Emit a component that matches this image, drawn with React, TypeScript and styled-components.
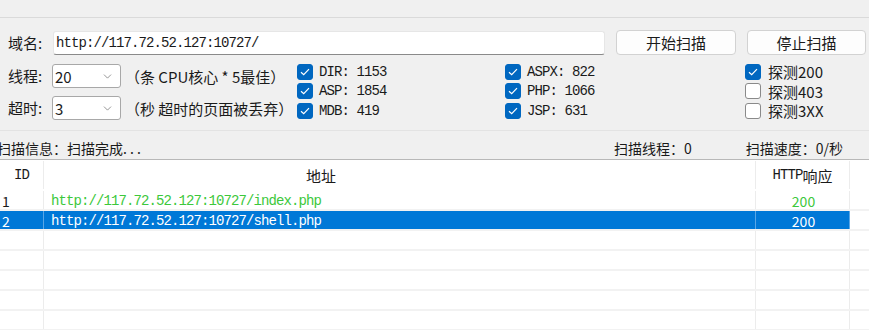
import React from 'react';
import styled, {createGlobalStyle} from 'styled-components';
import {ChevronDown} from 'lucide-react';

const GlobalStyle = createGlobalStyle`
    body {
        margin: 0;
        background: #f0f0f0;
        font-family: "Noto Sans CJK SC", "Noto Sans", sans-serif;
        color: #1a1a1a;
        overflow: hidden;
    }
`

const colors = {
    blue: '#0067c0',
    select: '#0078d7',
    green: '#3cc83c',
    rowLine: '#f2f2f2',
}

const Window = styled.div`
    width: 869px;
    height: 330px;
    overflow: hidden;
    display: flex;
    flex-direction: column;
`

const TopStrip = styled.div`
    height: 17px;
    border-bottom: 1px solid #dadada;
    flex-shrink: 0;
`

const Form = styled.div`
    height: 112px;
    flex-shrink: 0;
    box-sizing: border-box;
    padding: 12px 3px 0 8px;
`

const Row = styled.div`
    display: flex;
    align-items: center;
    height: 25px;
`

const Label = styled.span<{ $w: number }>`
    width: ${p => p.$w}px;
    flex-shrink: 0;
    font-size: 15px;
    line-height: 20px;
`

const Mono = styled.span<{ $color?: string }>`
    font-family: "Liberation Mono", "DejaVu Sans Mono", monospace;
    font-size: 14px;
    letter-spacing: -0.9px;
    color: ${p => p.$color || 'inherit'};
    white-space: pre;
`

const UrlInput = styled.div`
    width: 552px;
    height: 24px;
    box-sizing: border-box;
    background: #fff;
    border: 1px solid #e6e6e6;
    border-bottom: 1px solid #8a8a8a;
    border-radius: 3px;
    display: flex;
    align-items: center;
    padding-left: 2px;
`

const Button = styled.button<{ $w: number }>`
    width: ${p => p.$w}px;
    height: 25px;
    margin-left: 11px;
    background: #fdfdfd;
    border: 1px solid #d2d2d2;
    border-radius: 4px;
    font-family: inherit;
    font-size: 15px;
    color: #1a1a1a;
    padding: 0;
    line-height: 22px;
`

const Options = styled.div`
    display: flex;
    margin-top: 9px;
`

const LeftCol = styled.div`
    width: 289px;
    display: flex;
    flex-direction: column;
    gap: 8px;
`

const ComboRow = styled.div`
    display: flex;
    align-items: center;
    height: 24px;
`

const Combo = styled.div`
    width: 69px;
    height: 24px;
    box-sizing: border-box;
    background: #fff;
    border: 1px solid #a8a8a8;
    border-radius: 3px;
    display: flex;
    align-items: center;
    justify-content: space-between;
    padding: 0 6px 0 2px;
    font-size: 15px;
    color: #6b6b6b;
`

const ComboValue = styled.span`
    color: #1a1a1a;
`

const Hint = styled.span`
    margin-left: 4px;
    font-size: 15px;
    white-space: nowrap;
`

const CheckCol = styled.div<{ $w?: number }>`
    width: ${p => p.$w ? `${p.$w}px` : 'auto'};
    display: grid;
    grid-auto-rows: 19.5px;
    margin-top: -2px;
`

const CheckItem = styled.label<{ $gap: number }>`
    display: flex;
    align-items: center;
    gap: ${p => p.$gap}px;
    font-size: 15px;
    white-space: nowrap;
`

const Box = styled.span<{ $on: boolean }>`
    width: 16px;
    height: 16px;
    box-sizing: border-box;
    border-radius: 3px;
    background: ${p => p.$on ? colors.blue : '#fff'};
    border: 1px solid ${p => p.$on ? colors.blue : '#8a8a8a'};
    display: flex;
    align-items: center;
    justify-content: center;
`

const StatusBar = styled.div`
    height: 30px;
    flex-shrink: 0;
    box-sizing: border-box;
    border-top: 1px solid #e3e3e3;
    border-bottom: 1px solid #b8b8b8;
    display: flex;
    align-items: center;
    padding-top: 6px;
    font-size: 14px;
    white-space: nowrap;
`

const StatusItem = styled.span<{ $left: number }>`
    margin-left: ${p => p.$left}px;
`

const Table = styled.div`
    flex: 1;
    background: #fff;
    display: flex;
    flex-direction: column;
`

const cols = '44px 712px 94px 1fr';

const HeadRow = styled.div`
    display: grid;
    grid-template-columns: ${cols};
    height: 31px;
    flex-shrink: 0;
`

const HeadCell = styled.div<{ $pad?: number; $last?: boolean }>`
    display: flex;
    align-items: center;
    justify-content: ${p => p.$pad !== undefined ? 'flex-start' : 'center'};
    padding-left: ${p => p.$pad || 0}px;
    border-right: ${p => p.$last ? 'none' : '1px solid #ececec'};
    margin: 1px 0 2px;
    font-size: 15px;
`

const BodyRow = styled.div<{ $sel?: boolean }>`
    display: grid;
    grid-template-columns: ${cols};
    height: 20px;
    flex-shrink: 0;
    box-sizing: border-box;
    border-bottom: 2px solid ${colors.rowLine};
    color: ${p => p.$sel ? '#fff' : colors.green};
`

const Cell = styled.div<{ $sel?: boolean; $center?: boolean; $last?: boolean; $pad?: number; $dark?: boolean }>`
    display: flex;
    align-items: center;
    justify-content: ${p => p.$center ? 'center' : 'flex-start'};
    padding: 1px 0 0 ${p => p.$pad ?? 2}px;
    background: ${p => p.$sel && !p.$last ? colors.select : 'transparent'};
    border-right: ${p => p.$last ? 'none' : `1px solid ${p.$sel ? '#5aa6e6' : '#ececec'}`};
    color: ${p => p.$dark && !p.$sel ? '#1a1a1a' : 'inherit'};
    font-size: 14px;
    line-height: 16px;
    white-space: nowrap;
`

const checks = [
    {w: 208, items: [['DIR: 1153', true], ['ASP: 1854', true], ['MDB: 419', true]]},
    {w: 240, items: [['ASPX: 822', true], ['PHP: 1066', true], ['JSP: 631', true]]},
]

const codes: [string, boolean][] = [['探测200', true], ['探测403', false], ['探测3XX', false]]

const results = [
    {id: '1', url: 'http://117.72.52.127:10727/index.php', code: '200'},
    {id: '2', url: 'http://117.72.52.127:10727/shell.php', code: '200', sel: true},
]

function Check({on}: { on: boolean }) {
    return (
        <Box $on={on}>
            {on && (
                <svg width="10" height="8" viewBox="0 0 10 8">
                    <path d="M1 4.2 L3.7 6.6 L9 1.2" fill="none" stroke="#fff" strokeWidth="1.2"/>
                </svg>
            )}
        </Box>
    )
}

export default function App() {
    return (
        <Window>
            <GlobalStyle/>
            <TopStrip/>
            <Form>
                <Row>
                    <Label $w={45}>域名:</Label>
                    <UrlInput><Mono>http://117.72.52.127:10727/</Mono></UrlInput>
                    <Button $w={120}>开始扫描</Button>
                    <Button $w={119}>停止扫描</Button>
                </Row>
                <Options>
                    <LeftCol>
                        <ComboRow>
                            <Label $w={44}>线程:</Label>
                            <Combo><ComboValue>20</ComboValue><ChevronDown size={13} strokeWidth={1.3}/></Combo>
                            <Hint>（条 CPU核心 * 5最佳）</Hint>
                        </ComboRow>
                        <ComboRow>
                            <Label $w={44}>超时:</Label>
                            <Combo><ComboValue>3</ComboValue><ChevronDown size={13} strokeWidth={1.3}/></Combo>
                            <Hint>（秒 超时的页面被丢弃）</Hint>
                        </ComboRow>
                    </LeftCol>
                    {checks.map((c, i) => (
                        <CheckCol key={i} $w={c.w}>
                            {c.items.map(([t, on]) => (
                                <CheckItem key={t as string} $gap={6}>
                                    <Check on={on as boolean}/>
                                    <Mono>{t}</Mono>
                                </CheckItem>
                            ))}
                        </CheckCol>
                    ))}
                    <CheckCol>
                        {codes.map(([t, on]) => (
                            <CheckItem key={t} $gap={7}>
                                <Check on={on}/>
                                <span>{t}</span>
                            </CheckItem>
                        ))}
                    </CheckCol>
                </Options>
            </Form>
            <StatusBar>
                <StatusItem $left={-3}>扫描信息：扫描完成. . .</StatusItem>
                <StatusItem $left={473}>扫描线程：0</StatusItem>
                <StatusItem $left={54}>扫描速度：0/秒</StatusItem>
            </StatusBar>
            <Table>
                <HeadRow>
                    <HeadCell><Mono>ID</Mono></HeadCell>
                    <HeadCell $pad={262}>地址</HeadCell>
                    <HeadCell><Mono>HTTP</Mono>响应</HeadCell>
                    <HeadCell $last/>
                </HeadRow>
                {results.map(r => (
                    <BodyRow key={r.id} $sel={r.sel}>
                        <Cell $sel={r.sel} $dark>{r.id}</Cell>
                        <Cell $sel={r.sel} $pad={7}><Mono>{r.url}</Mono></Cell>
                        <Cell $sel={r.sel} $center>{r.code}</Cell>
                        <Cell $last/>
                    </BodyRow>
                ))}
                {[0, 1, 2, 3, 4].map(i => (
                    <BodyRow key={i}>
                        <Cell/><Cell/><Cell/><Cell $last/>
                    </BodyRow>
                ))}
            </Table>
        </Window>
    )
}
